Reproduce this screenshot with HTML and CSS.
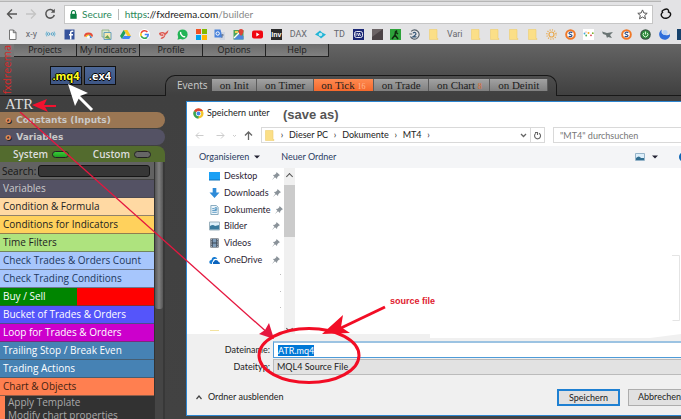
FILE: index.html
```html
<!DOCTYPE html>
<html lang="de">
<head>
<meta charset="utf-8">
<title>fxDreema builder</title>
<link rel="stylesheet" href="styles.css">
</head>
<body>
<svg class="defs" aria-hidden="true">
  <defs>
    <symbol id="i-folder" viewBox="0 0 11 11"><path d="M1.500.5h7.500v9h1v1h-8.500z" fill="#fbdf87" stroke="#efcf70" stroke-width=".6"/></symbol>
    <symbol id="i-pin" viewBox="0 0 8 8"><path d="M4.500 0 8 3.300 6.800 3.700 5.300 5.300 5 7 3 5.200 0 8 2.400 4.700.9 3 2.800 2.700 4.300 1.300z" fill="#8a9299"/></symbol>
    <symbol id="i-s" viewBox="0 0 11 11"><circle cx="5.500" cy="5.500" r="4.300" fill="#fff" stroke="#f07828" stroke-width="2"/><path d="M7.300 3.800C6 2.700 3.800 3.300 4 4.500c.2 1.200 3 .8 3 2.100S4.800 8 3.700 7.200" fill="none" stroke="#2b4c86" stroke-width="1.200"/></symbol>
  </defs>
</svg>
<header class="browser">
  <div class="tabstrip"></div>
  <div class="toolbar">
    <button class="nav" aria-label="Back"><svg viewBox="0 0 12 12"><path d="M11 6H2M6 1.500 1.500 6 6 10.500" fill="none" stroke="#555" stroke-width="1.400"/></svg></button>
    <button class="nav" aria-label="Forward"><svg viewBox="0 0 12 12"><path d="M1 6h9M6 1.500 10.500 6 6 10.500" fill="none" stroke="#c4c4c4" stroke-width="1.400"/></svg></button>
    <button class="nav" aria-label="Reload"><svg viewBox="0 0 12 12"><path d="M9.800 3.500A4.300 4.300 0 1 0 10.300 7" fill="none" stroke="#555" stroke-width="1.500"/><path d="M10.800.8v4H6.800z" fill="#555"/></svg></button>
    <div class="address">
      <svg class="lock" viewBox="0 0 7 9"><path d="M1.500 4V2.500a2 2 0 0 1 4 0V4" fill="none" stroke="#0b8043" stroke-width="1.200"/><rect x=".3" y="3.800" width="6.400" height="5" fill="#0b8043"/></svg>
      <span class="secure">Secure</span>
      <span class="url"><span class="scheme">https</span>://fxdreema.com<span class="path">/builder</span></span>
      <svg class="star" viewBox="0 0 11 11"><path d="M5.500.9 6.900 4l3.300.3-2.500 2.200.8 3.300-3-1.800-3 1.800.8-3.300L.8 4.300 4.100 4z" fill="none" stroke="#555"/></svg>
    </div>
    <svg class="ext" viewBox="0 0 12 12"><path d="M4.500 1.500C7.500 0 9 2 8.500 4c2.500.5 2.500 2.500 1.500 4-1.500 2.500-5.500 3-7.500 1.200C.5 7.500 1 5.500 2.500 4.500 1.500 3 3 2.300 4.500 1.500z" fill="none" stroke="#111" stroke-width="1.400"/></svg>
  </div>
  <nav class="bookmarks">
    <a href="#" aria-label="Page"><svg viewBox="0 0 11 11"><path d="M2.500 1h4l2.500 2.500V10.500H2.500zM6.300 1v2.700H9" fill="#fff" stroke="#666" stroke-width=".9"/></svg></a>
    <a href="#">x-y</a>
    <a href="#" aria-label="Radio"><svg viewBox="0 0 11 11"><path d="M1.800 2.500q-1.800 2.500 0 5M9.200 2.500q1.800 2.500 0 5" fill="none" stroke="#79b9d4"/><circle cx="3.500" cy="5" r="1.300" fill="none" stroke="#58a5c7"/><circle cx="7.500" cy="5" r="1.300" fill="none" stroke="#58a5c7"/></svg></a>
    <a href="#" aria-label="Facebook"><svg viewBox="0 0 11 11"><path d="M.5.500h10v10H.5z" fill="#35529b"/><path d="M9.300 2.200H8Q6.700 2.200 6.700 3.600v7M5 5.700h4" fill="none" stroke="#fff" stroke-width="1.500"/></svg></a>
    <a href="#" aria-label="Arc"><svg viewBox="0 0 11 11"><path d="M1 7.500q0-4 4.500-4t4.500 4z" fill="#e64a3b"/><path d="M2.500 8q0-2.500 3-2.500t3 2.500z" fill="#f6c52b"/><path d="M6 6q2 0 3 3H6z" fill="#4688e0"/><circle cx="5.500" cy="8" r="1.500" fill="#fff"/></svg></a>
    <a href="#" aria-label="Photos"><svg viewBox="0 0 11 11"><path d="M1 1h7v7H1z" fill="#d7e8cf" stroke="#8bac7c" stroke-width=".8"/><path d="M3 3.500h7v7H3z" fill="#f7eab0" stroke="#65a0bd"/><path d="m3.500 9 3-3 3 4z" fill="#69a454"/></svg></a>
    <a href="#" aria-label="Drive"><svg viewBox="0 0 11 11"><path d="M3.700 1h3.600l3.700 6H7.500z" fill="#fbc926"/><path d="M3.700 1 5.500 4 2 10 0 7z" fill="#1fa05b"/><path d="M3.800 7H11l-1.800 3H2z" fill="#4285f4"/></svg></a>
    <a href="#" aria-label="Google"><svg viewBox="0 0 11 11"><circle cx="5.500" cy="5.500" r="5.500" fill="#fff"/><g fill="none" stroke-width="1.600"><path d="M8.400 3A3.700 3.700 0 0 0 2.200 4" stroke="#ea4335"/><path d="M2.200 4a3.700 3.700 0 0 0 0 3.200" stroke="#fbbc05"/><path d="M2.200 7.200A3.700 3.700 0 0 0 8 8.300" stroke="#34a853"/><path d="M8 8.300Q9.300 7 9.200 5.500H5.700" stroke="#4285f4"/></g></svg></a>
    <a href="#" aria-label="Kite"><svg viewBox="0 0 11 11"><path d="M1 4q4-2 6 0l3.500-3q0 3-3 5-1 4-5 4l2-3Q1 7 1 4z" fill="#dc5b52"/><path d="M3 5q3-1 3 1T3.500 7.500" fill="none" stroke="#f4cccc"/></svg></a>
    <a href="#" aria-label="WhatsApp"><svg viewBox="0 0 11 11"><circle cx="5.600" cy="5.400" r="5" fill="#22b455"/><path d="M.5 10.700 1.500 7 4 9.700z" fill="#22b455"/><path d="M3.600 3q-.5 2 1.500 3.700T8.200 7.500" fill="none" stroke="#fff" stroke-width="1.500"/></svg></a>
    <a href="#" aria-label="Microsoft"><svg viewBox="0 0 11 11"><path d="M0 0h5v5H0z" fill="#f25022"/><path d="M6 0h5v5H6z" fill="#7fba00"/><path d="M0 6h5v5H0z" fill="#00a4ef"/><path d="M6 6h5v5H6z" fill="#ffb900"/></svg></a>
    <a href="#" aria-label="Translate"><svg viewBox="0 0 11 11"><path d="M4 3h7v8H6z" fill="#d0d6e2"/><path d="M.5.500h6l2 8h-8z" fill="#4a83dc"/><circle cx="3.700" cy="4.500" r="1.700" fill="none" stroke="#fff"/><path d="M7 6h3M8.500 5v1q0 2-1 3" stroke="#6b7890" fill="none" stroke-width=".8"/></svg></a>
    <a href="#" aria-label="Maps"><svg viewBox="0 0 11 11"><path d="M.5 1h10v9.500H.5z" fill="#4ca55a"/><path d="M.5 10.500 7 4l3.500 3.500v3z" fill="#4d86dd"/><path d="m1 9 7-7" stroke="#fff" stroke-width="1.500"/><path d="M8 7Q5.500 4 5.500 2.500a2.500 2.500 0 0 1 5 0Q10.500 4 8 7z" fill="#dd4337"/><path d="M2 2h3v2H2z" fill="#f2cd58"/></svg></a>
    <a href="#" aria-label="YouTube"><svg viewBox="0 0 11 11"><rect y="1.500" width="11" height="8" rx="2" fill="#f00812"/><path d="M4.300 3.500 7.500 5.500 4.300 7.500z" fill="#fff"/></svg></a>
    <a href="#" class="inv">Inv</a>
    <a href="#">DAX</a>
    <a href="#" aria-label="Eye"><svg viewBox="0 0 11 11"><path d="M0 5.500 5 1.500 7 3.500l4 2-5 4-2-2z" fill="#22b4d6"/><circle cx="5.500" cy="5.500" r="1.800" fill="#bceaf2"/></svg></a>
    <a href="#">TD</a>
    <a href="#" aria-label="IW"><svg viewBox="0 0 11 11"><path d="M0 0h11v11H0z" fill="#1b2775"/><rect x="1.500" y="2.500" width="8" height="6" rx="2" fill="none" stroke="#fff" stroke-width=".9"/><path d="M3 4v3M4.500 4l1 3 1-3 1 3" stroke="#fff" fill="none" stroke-width=".8"/></svg></a>
    <a href="#" aria-label="Tile"><svg viewBox="0 0 11 11"><path d="M0 0h11v11H0z" fill="#4b4346"/><path d="M0 0h11L0 8z" fill="#6b6365"/></svg></a>
    <a href="#" aria-label="Runner"><svg viewBox="0 0 11 11"><path d="M0 0h11v11H0z" fill="#2da23a"/><path d="m2 10 3-4 .5-3L8 5M5 6l3 4M7 1.500l-1 1.200" stroke="#102b10" fill="none" stroke-width="1.500"/></svg></a>
    <a href="#" aria-label="Two"><svg viewBox="0 0 11 11"><path d="M2.200 2.300a4.600 4.600 0 1 1-.8 5.200M.3 5h3" fill="none" stroke="#56616a" stroke-width="1.100"/><path d="M4 4.200Q5.500 2.500 6.700 4T4 7.800h3.500" fill="none" stroke="#355777" stroke-width="1.200"/></svg></a>
    <a href="#" aria-label="Vari folder"><svg><use href="#i-folder"/></svg></a>
    <a href="#">Vari</a>
    <a href="#" aria-label="Folder"><svg><use href="#i-folder"/></svg></a>
    <a href="#" aria-label="Folder"><svg><use href="#i-folder"/></svg></a>
    <a href="#" aria-label="Folder"><svg><use href="#i-folder"/></svg></a>
    <a href="#" aria-label="Folder"><svg><use href="#i-folder"/></svg></a>
    <a href="#" aria-label="Sun"><svg viewBox="0 0 11 11"><circle cx="5.500" cy="5.500" r="2.500" fill="none" stroke="#e9a94d" stroke-width="1.200"/><circle cx="5.500" cy="5.500" r="4.600" fill="none" stroke="#e9a94d" stroke-width="1.400" stroke-dasharray="1 1.400"/></svg></a>
    <a href="#" aria-label="S"><svg><use href="#i-s"/></svg></a>
    <a href="#" aria-label="Dots"><svg viewBox="0 0 11 11"><path d="M0 0h11v11H0z" fill="#fff"/><circle cx="1.500" cy="4.500" r=".9" fill="#3ca9da"/><circle cx="3.200" cy="6.500" r=".9" fill="#4caf50"/><circle cx="5.500" cy="4" r="1" fill="#f5a623"/><circle cx="8" cy="6.300" r=".9" fill="#da3c50"/><circle cx="9.800" cy="4.200" r=".9" fill="#7aad27"/><circle cx="3" cy="3" r=".6" fill="#e64"/></svg></a>
    <a href="#" aria-label="Bird"><svg viewBox="0 0 11 11"><path d="M0 2.500 5 4l6-1-3 3 2 3-4-1-1 1-1-3-3-1z" fill="#6a7474"/></svg></a>
    <a href="#" aria-label="S"><svg><use href="#i-s"/></svg></a>
    <a href="#" aria-label="Power"><svg viewBox="0 0 11 11"><circle cx="5.500" cy="5.500" r="5.300" fill="#3b5345"/><circle cx="5.500" cy="5.500" r="4" fill="#2f8b3d"/><path d="M4 3.800a2.300 2.300 0 1 0 3 0M5.500 2.500v3" fill="none" stroke="#d7f5d7"/></svg></a>
    <a href="#" aria-label="Moon"><svg viewBox="0 0 11 11"><path d="M3 .5Q1 5 6 6t5-2A5.500 5.500 0 1 1 3 .5z" fill="#2d6ddb"/><circle cx="6" cy="3.500" r="2.500" fill="#b8d2f4"/></svg></a>
    <a href="#" aria-label="Square"><svg viewBox="0 0 11 11"><path d="M0 0h11v11H0z" fill="#17426b"/></svg></a>
  </nav>
</header>

<div class="app">
  <div class="masthead">
    <div class="brand"><span>fxdreema</span></div>
    <div class="head">
      <nav class="menu">
        <button>Projects</button><button>My Indicators</button><button>Profile</button><button>Options</button><button>Help</button>
      </nav>
      <div class="subhead">
        <div class="export"><button class="mq">.mq4</button><button>.ex4</button></div>
        <div class="events">
          <span class="events-label">Events</span>
          <button>on Init</button><button>on Timer</button><button class="on">on Tick <small class="pale">16</small></button><button>on Trade</button><button>on Chart <small>8</small></button><button>on Deinit</button>
        </div>
        <div class="rest"></div>
      </div>
    </div>
  </div>
  <div class="main">
    <aside class="sidebar">
      <h1>ATR</h1>
      <button class="fold inputs"><i>o</i>Constants (Inputs)</button>
      <button class="fold vars"><i>o</i>Variables</button>
      <div class="source">
        <label>System<input type="checkbox" checked></label>
        <label>Custom<input type="checkbox"></label>
      </div>
      <div class="catalog">
        <div class="blocks">
          <div class="search"><label for="q">Search:</label><input id="q" type="text"></div>
          <button class="cat slate">Variables</button>
          <button class="cat peach">Condition &amp; Formula</button>
          <button class="cat amber">Conditions for Indicators</button>
          <button class="cat green">Time Filters</button>
          <button class="cat sky">Check Trades &amp; Orders Count</button>
          <button class="cat sky">Check Trading Conditions</button>
          <button class="cat buysell">Buy / Sell</button>
          <button class="cat blue">Bucket of Trades &amp; Orders</button>
          <button class="cat magenta">Loop for Trades &amp; Orders</button>
          <button class="cat steel">Trailing Stop / Break Even</button>
          <button class="cat steel">Trading Actions</button>
          <button class="cat coral">Chart &amp; Objects</button>
          <div class="sub"><button>Apply Template</button><button>Modify chart properties</button></div>
        </div>
        <div class="track"><div class="thumb"></div></div>
      </div>
    </aside>
    <main class="canvas">
      <section class="dialog" aria-label="Speichern unter">
        <div class="title">
          <svg viewBox="0 0 12 12"><circle cx="6" cy="6" r="5.500" fill="#f5c52c"/><path d="M6 6 1 3.200A5.600 5.600 0 0 1 11 3.300H6z" fill="#dc4638"/><path d="M1 3.200 6 6v5.500A5.600 5.600 0 0 1 1 3.200z" fill="#38a457"/><circle cx="6" cy="6" r="2.800" fill="#fff"/><circle cx="6" cy="6" r="2.100" fill="#4684e8"/></svg>
          <span>Speichern unter</span>
        </div>
        <div class="location">
          <button class="go" aria-label="Zurück"><svg viewBox="0 0 9 9"><path d="M8.500 4.500H1M4 1.500l-3 3 3 3" fill="none" stroke="#ccc"/></svg></button>
          <button class="go" aria-label="Vor"><svg viewBox="0 0 9 9"><path d="M.5 4.500H8M5 1.500l3 3-3 3" fill="none" stroke="#ccc"/></svg></button>
          <button class="go tiny" aria-label="Verlauf"><svg viewBox="0 0 9 9"><path d="m3 4 1.500 1.500L6 4" fill="none" stroke="#ccc"/></svg></button>
          <button class="go" aria-label="Nach oben"><svg viewBox="0 0 9 9"><path d="M4.500 9V1M1 4.500 4.500 1 8 4.500" fill="none" stroke="#666" stroke-width="1.300"/></svg></button>
          <div class="crumbs">
            <svg><use href="#i-folder"/></svg><b>›</b><a href="#">Dieser PC</a><b>›</b><a href="#">Dokumente</a><b>›</b><a href="#">MT4</a><b>›</b>
            <svg class="drop" viewBox="0 0 9 9"><path d="m2 3 2.500 2.500L7 3" fill="none" stroke="#666" stroke-width="1.300"/></svg>
            <button class="refresh" aria-label="Aktualisieren"><svg viewBox="0 0 9 9"><path d="M6 2.200a3 3 0 1 1-3.200.2M2 1.500h2.500V4" fill="none" stroke="#666" stroke-width="1.100"/></svg></button>
          </div>
          <input class="find" type="text" aria-label="Durchsuchen" placeholder='"MT4" durchsuchen'>
        </div>
        <div class="commands">
          <button>Organisieren <svg viewBox="0 0 6 4"><path d="M0 .5h6L3 3.500z" fill="#223"/></svg></button>
          <button>Neuer Ordner</button>
          <button class="view" aria-label="Ansicht"><svg class="pic" viewBox="0 0 10 8"><path d="M.5.500h9v7h-9z" fill="#dceefa" stroke="#96b4c9"/><path d="M1 5q3-3 5 0h3v2H1z" fill="#316e90"/></svg><svg viewBox="0 0 6 4"><path d="M0 .5h6L3 3.500z" fill="#223"/></svg></button>
          <svg class="help" viewBox="0 0 10 10"><circle cx="5" cy="5" r="5" fill="#0c65b5"/></svg>
        </div>
        <div class="browse">
          <ul class="places">
            <li><svg viewBox="0 0 11 9"><path d="M0 .5h11v8H0z" fill="#1aa0f5"/><path d="M0 8h11v1H0z" fill="#0d71b9"/></svg><a href="#">Desktop</a><svg class="pin"><use href="#i-pin"/></svg></li>
            <li><svg viewBox="0 0 11 11"><path d="M3.500 0h4v5H11L5.500 11 0 5h3.500z" fill="#2e8bd8"/></svg><a href="#">Downloads</a><svg class="pin"><use href="#i-pin"/></svg></li>
            <li><svg viewBox="0 0 11 11"><path d="M1.500.5h6L9.500 2.500v8h-8z" fill="#eef6fb" stroke="#7ca2ba"/><path d="M3 4h2M3 6h5M3 8h5M6 3h2v2H6z" stroke="#4d92bf" fill="none"/></svg><a href="#">Dokumente</a><svg class="pin"><use href="#i-pin"/></svg></li>
            <li><svg viewBox="0 0 11 9"><path d="M.5.500h10v8H.5z" fill="#dcf0fa" stroke="#9bb1bd"/><path d="M1 4.500q3-2 5 0l4-1V8H1z" fill="#37799c"/></svg><a href="#">Bilder</a><svg class="pin"><use href="#i-pin"/></svg></li>
            <li><svg viewBox="0 0 11 11"><path d="M1 .5h9v10H1z" fill="#3c4652"/><path d="M3.500 1h4v4h-4zM3.500 6h4v4h-4z" fill="#7f9dba"/><path d="M2.200 1v9M8.800 1v9" stroke="#cdd3d9" stroke-dasharray="1 1"/></svg><a href="#">Videos</a><svg class="pin"><use href="#i-pin"/></svg></li>
            <li><svg viewBox="0 0 11 9"><path d="M3 8.500H2Q0 8 .3 6.200T2.500 4.500Q3 1 6 1.500q2 .3 2.300 2-4-.8-4.500 2.200Q2.500 7 3 8.500z" fill="#1379d1"/><path d="M4 8.500Q3.200 6.500 5 6q1-2.300 3.500-1 1 .5 1 1.500 1.500.2 1.500 1.200T10 8.500z" fill="#0a63bd"/></svg><a href="#">OneDrive</a><svg class="pin"><use href="#i-pin"/></svg></li>
          </ul>
          <div class="scroll"><span class="up"></span><div class="bar"></div><span class="down"></span></div>
          <div class="files"></div>
        </div>
        <div class="footer">
          <label for="fn">Dateiname:</label><input id="fn" type="text" value="ATR.mq4">
          <label for="ft">Dateityp:</label><select id="ft"><option>MQL4 Source File</option></select>
        </div>
        <div class="actions">
          <button class="hide"><svg viewBox="0 0 8 6"><path d="m1.500 5 2.500-3 2.500 3" fill="none" stroke="#444" stroke-width="1.200"/></svg>Ordner ausblenden</button>
          <button class="push primary">Speichern</button>
          <button class="push">Abbrechen</button>
        </div>
      </section>
    </main>
  </div>
</div>

<svg class="marks" viewBox="0 0 681 419" aria-hidden="true">
  <path d="M430 333h251v1L650 338H430z" fill="#fff"/>
  <path d="M672 255.500h7.500v65h-7" fill="none" stroke="#e4e4e4"/>
  <g fill="#bbb"><path d="M280 274h1v1h-1zM280 291h1v1h-1zM280 307h1v1h-1z"/></g>
  <path d="M210 330.500h9" stroke="#f3e3a0"/>
  <path d="M20 112 270 335" stroke="#e5173f" stroke-width="1.300"/>
  <path d="m274 339-15-5 6-4 4-7z" fill="#e5173f"/>
  <path d="M56 106H40" stroke="#f3122f" stroke-width="2"/>
  <path d="m32 105 15-6-3 6 4 7z" fill="#f3122f"/>
  <path d="m92 110-14-14" stroke="#fff" stroke-width="3"/>
  <path d="m68 84 20 9-8 3-5 10z" fill="#fff"/>
  <ellipse cx="309" cy="355.500" rx="50" ry="27" fill="none" stroke="#f20d25" stroke-width="3"/>
  <path d="M385 307 341 328" stroke="#f20d25" stroke-width="3"/>
  <path d="m322 334 21-19-2 12 9 6z" fill="#f20d25"/>
</svg>
<p class="note save">(save as)</p>
<p class="note src">source file</p>
<script src="app.js"></script>
</body>
</html>
```
FILE: styles.css
```css
* { box-sizing: border-box; }
body {
  margin: 0; height: 100vh; overflow: hidden; position: relative;
  display: flex; flex-direction: column;
  font: 10px/14px "Open Sans", "Noto Sans", sans-serif; color: #222; background: #3e3e3e;
}
button, input, select { font: inherit; color: inherit; margin: 0; padding: 0; border: 0; border-radius: 0; background: none; appearance: none; outline: 0; text-align: left; white-space: nowrap; }
a { color: inherit; text-decoration: none; }
svg { display: block; flex: none; }
.defs { position: absolute; width: 0; height: 0; }

.browser { background: #e3e3e5; flex: none; }
.tabstrip { height: 2px; background: #d4d4d4; border-bottom: 1px solid #b5b5b5; margin-right: 20px; }
.toolbar { display: flex; align-items: center; height: 24px; padding: 0 9px 0 6px; gap: 7px; }
.nav { width: 12px; }
.nav svg, .ext { width: 12px; height: 12px; }
.address { flex: 1; display: flex; align-items: center; height: 19px; margin-left: 1px; padding: 0 4px 0 5px; background: #fff; border: 1px solid #c6c6c6; }
.lock { width: 7px; height: 9px; margin-right: 5px; }
.secure { color: #2d8a5b; padding-right: 6px; margin-right: 6px; border-right: 1px solid #bbb; line-height: 11px; }
.secure, .url { font-family: Lato, sans-serif; font-size: 10px; }
.scheme { color: #2d8a5b; }
.path { color: #888; }
.star { width: 11px; height: 11px; margin-left: auto; }
.bookmarks { display: flex; justify-content: space-between; align-items: center; height: 18px; padding-left: 7px; margin-right: -8px; padding-bottom: 2px; font: 9px/12px Roboto, sans-serif; color: #66686e; }
.bookmarks svg { width: 11px; height: 11px; }
.inv { width: 11px; height: 11px; background: #2a2a2a; color: #fff; font: bold 7px/11px "Liberation Sans", sans-serif; text-align: center; }

.app { flex: 1; min-height: 0; display: flex; flex-direction: column; background: linear-gradient(#646464, #404040 51px, #424242); }
.masthead { display: flex; height: 52px; flex: none; }
.brand { width: 14px; display: flex; align-items: center; justify-content: center; background: linear-gradient(#777, #777 13px, transparent 13px); }
.brand span { writing-mode: vertical-rl; transform: rotate(180deg); color: #d92a2a; font-size: 11px; line-height: 14px; }
.head { flex: 1; display: flex; flex-direction: column; }
.menu { display: flex; height: 13px; }
.menu button { width: 63px; text-align: center; font-size: 9px; line-height: 12px; color: #1d1d1d; background: linear-gradient(#6b6b6b, #808080); border-right: 1px solid #222; border-bottom: 1px solid #222; }
.subhead { flex: 1; display: flex; align-items: flex-end; margin-left: -14px; }
.export { width: 165px; align-self: stretch; display: flex; gap: 2px; padding: 9px 0 0 50px; border-bottom: 1px solid #181818; }
.export button { width: 32px; height: 19px; border: 1px solid #111; background: linear-gradient(#4c6796, #3e5685); color: #fff; font-weight: bold; font-size: 11px; line-height: 15px; text-align: center; text-shadow: 1px 0 #000, -1px 0 #000, 0 1px #000, 0 -1px #000; }
.export .mq { color: #ff2; }
.events { display: flex; align-items: center; height: 21px; padding: 0 8px 2px 11px; border: 1px solid #181818; border-bottom: 0; border-radius: 10px 10px 0 0; width: 392px; }
.events-label { width: 35px; color: #ccc; font-size: 10px; }
.events button { flex: 1 1 auto; height: 12px; padding: 0 4px; text-align: center; font: 11px/12px "Liberation Serif", serif; color: #1c1c1c; background: linear-gradient(#a2a2a2, #808080); border-right: 1px solid #5b5b5b; }
.events .on { background: linear-gradient(#ff8a50, #f4682c); }
.events small { font-size: 8px; color: #e0692e; }
.events .pale { color: #ffb892; }
.rest { flex: 1; border-bottom: 1px solid #181818; }

.main { flex: 1; min-height: 0; display: flex; }
.sidebar { width: 165px; flex: none; display: flex; flex-direction: column; overflow: hidden; }
h1 { margin: 0; padding-left: 5px; height: 16px; font: 15px/16px "Liberation Serif", serif; color: #ddd; flex: none; }
.fold { height: 16px; flex: none; margin-bottom: 1px; border-radius: 0 8px 8px 0; font: bold 9px/16px "DejaVu Sans", "Noto Sans", sans-serif; color: #c9c9c9; }
.fold i { font-style: normal; color: #e08a5a; padding: 0 5px 0 5px; text-shadow: 1px 1px #222; }
.inputs { background: #9a7653; }
.vars { background: #545264; }
.source { display: flex; justify-content: space-between; align-items: center; flex: none; height: 16px; padding: 0 14px 0 13px; background: #536b2e; border-radius: 0 8px 0 0; color: #ddd; font-size: 10px; font-weight: 600; }
.source label { display: flex; align-items: center; gap: 4px; }
.source input { width: 17px; height: 7px; border: 1px solid #222; border-radius: 4px; background: #666; }
.source input:checked { background: linear-gradient(#37cc37, #229c22); }
.catalog { flex: 1; min-height: 0; display: flex; overflow: hidden; }
.blocks { width: 154px; flex: none; display: flex; flex-direction: column; background: #323232; }
.search { display: flex; align-items: center; height: 18px; flex: none; padding: 0 4px 0 2px; gap: 2px; background: #626262; font-size: 10px; color: #151515; border-bottom: 1px solid #444; }
.search input { flex: 1; min-width: 0; height: 12px; border: 1px solid #161616; border-radius: 3px; background: #363636; }
.cat { height: 18px; flex: none; padding-left: 3px; font-size: 10px; line-height: 17px; border-bottom: 1px solid rgba(70, 70, 70, .6); }
.slate { background: #545264; color: #ccc; }
.peach { background: #ffd9a3; }
.amber { background: #ffd15c; }
.green { background: #aee37e; }
.sky { background: #a7c6fc; color: #23385c; }
.buysell { background: linear-gradient(90deg, #008500 50%, #f00 50%); }
.blue { background: #5555fa; }
.magenta { background: #cc00cc; }
.steel { background: #4682b4; }
.buysell, .blue, .magenta, .steel { color: #fff; font-weight: 500; }
.coral { background: #ff7f50; color: #451f10; }
.sub { flex: none; display: flex; flex-direction: column; border-left: 5px solid #ff7f50; padding-left: 3px; font-size: 10px; line-height: 13px; color: #aaa; }
.track { width: 11px; background: #454545; border-left: 1px solid #333; border-right: 2px solid #383838; }
.thumb { height: 147px; background: linear-gradient(90deg, #555, #808080, #555); border-radius: 0 0 3px 3px; }

.canvas { flex: 1; min-width: 0; display: flex; padding: 5px 0 3px 21px; overflow: hidden; }
.dialog { flex: 1; min-width: 0; display: flex; flex-direction: column; background: #fff; border: 1px solid #2d86d0; border-right: 0; font-family: Lato, sans-serif; font-size: 9px; color: #222; overflow: hidden; }
.title { display: flex; align-items: center; gap: 3px; height: 22px; flex: none; padding-left: 6px; }
.title svg { width: 11px; height: 11px; }
.location { display: flex; align-items: center; height: 22px; flex: none; padding-left: 8px; }
.go { margin-right: 12px; }
.go svg { width: 9px; height: 9px; }
.go + .go { margin-right: 5px; }
.tiny + .go { margin-right: 8px; }
.crumbs { flex: 1; max-width: 286px; height: 16px; display: flex; align-items: center; border: 1px solid #d9d9d9; padding-left: 2px; margin-right: 8px; }
.crumbs > svg { width: 11px; height: 11px; }
.crumbs b { font-weight: normal; width: 14px; text-align: center; }
.crumbs .drop { width: 9px; height: 9px; margin-left: auto; margin-right: 2px; }
.refresh { width: 14px; height: 14px; border-left: 1px solid #d9d9d9; padding-left: 2px; }
.refresh svg { width: 9px; height: 9px; }
.find { width: 128px; height: 16px; border: 1px solid #d9d9d9; border-right: 0; padding-left: 6px; color: #777; flex: none; }
.find::placeholder { color: #777; opacity: 1; }
.commands { display: flex; align-items: center; height: 22px; flex: none; padding-left: 12px; gap: 21px; background: #f4f5f7; color: #2a3b62; }
.commands button { display: flex; align-items: center; gap: 5px; }
.commands button svg { width: 6px; height: 4px; }
.commands .view { margin-left: auto; gap: 7px; }
.commands .view .pic { width: 10px; height: 8px; }
.help { width: 10px; height: 10px; margin-right: -8px; }
.browse { flex: 1; min-height: 0; display: flex; }
.places { width: 97px; height: 100px; margin: 0; padding: 0 4px 0 22px; list-style: none; display: flex; flex-direction: column; }
.places li { flex: 1; display: flex; align-items: center; gap: 4px; color: #2b1c33; }
.places svg { width: 11px; height: 10px; }
.places .pin { width: 8px; height: 8px; margin-left: auto; }
.scroll { width: 11px; display: flex; flex-direction: column; background: #f0f0f0; }
.bar { height: 52px; background: #cbcbcb; }
.up, .down { height: 17px; display: flex; align-items: center; justify-content: center; }
.up::before, .down::before { content: ""; width: 4px; height: 4px; border: solid #555; border-width: 1px 0 0 1px; transform: rotate(45deg); }
.down { margin-top: auto; height: 12px; }
.down::before { transform: rotate(225deg); }
.footer { display: grid; grid-template-columns: 83px 1fr; column-gap: 3px; row-gap: 1px; flex: none; padding-top: 7px; background: #f0f0f0; align-items: center; }
.footer label { text-align: right; }
.footer input { height: 17px; background: #fff; border: 1px solid #4e9bd8; border-top: 2px solid #9cc3e2; border-right: 0; padding-left: 4px; }
.footer input::selection { background: #0078d7; color: #fff; }
.footer select { height: 16px; background: #e2e2e2; border: 1px solid #bbb; border-right: 0; padding-left: 3px; }
.actions { display: flex; align-items: center; height: 40px; flex: none; padding: 4px 0 0 8px; gap: 8px; background: #f0f0f0; }
.hide { display: flex; align-items: center; gap: 5px; margin-right: auto; }
.hide svg { width: 8px; height: 6px; }
.push { width: 63px; height: 17px; text-align: center; background: #e1e1e1; border: 1px solid #adadad; flex: none; }
.push:last-child { margin-right: -10px; }
.primary { border: 2px solid #1e80d2; }

.marks { position: absolute; left: 0; top: 0; width: 681px; height: 419px; pointer-events: none; }
.note { position: absolute; margin: 0; font-family: "Liberation Sans", sans-serif; font-weight: bold; }
.save { left: 283px; top: 107px; font-size: 13px; line-height: 16px; color: #555; }
.src { left: 390px; top: 295px; font-size: 9px; line-height: 12px; color: #e0202f; }
```
FILE: app.js
```js
const nameField = document.getElementById("fn");
nameField.focus();
nameField.select();
```
